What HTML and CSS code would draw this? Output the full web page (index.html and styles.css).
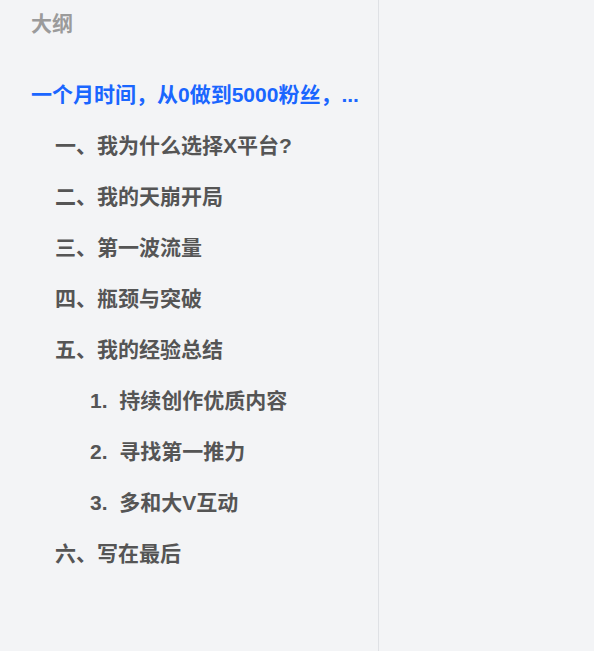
FILE: index.html
```html
<!DOCTYPE html>
<html lang="zh-CN">
<head>
<meta charset="utf-8">
<title>大纲</title>
<link rel="stylesheet" href="styles.css">
</head>
<body>
<div class="layout">
  <aside class="sidebar">
    <div class="sidebar-title">大纲</div>
    <ul class="outline">
      <li class="item level-1 active">一个月时间，从0做到5000粉丝，...</li>
      <li class="item level-2">一、我为什么选择X平台?</li>
      <li class="item level-2">二、我的天崩开局</li>
      <li class="item level-2">三、第一波流量</li>
      <li class="item level-2">四、瓶颈与突破</li>
      <li class="item level-2">五、我的经验总结</li>
      <li class="item level-3">1.&nbsp;&nbsp;持续创作优质内容</li>
      <li class="item level-3">2.&nbsp;&nbsp;寻找第一推力</li>
      <li class="item level-3">3.&nbsp;&nbsp;多和大V互动</li>
      <li class="item level-2">六、写在最后</li>
    </ul>
  </aside>
  <main class="content"></main>
</div>
</body>
</html>
```

FILE: styles.css
```css
html, body {
  margin: 0;
  padding: 0;
  height: 100%;
  background: #f3f4f6;
  font-family: "Liberation Sans", "Noto Sans CJK SC", sans-serif;
}

.layout {
  display: flex;
  height: 100%;
}

.sidebar {
  box-sizing: border-box;
  width: 379px;
  flex: 0 0 379px;
  border-right: 1px solid #dfe1e5;
  padding: 10px 12px 0 31px;
}

.sidebar-title {
  font-size: 21px;
  line-height: 28px;
  font-weight: bold;
  color: #9b9b9b;
}

.outline {
  list-style: none;
  margin: 31px 0 0 0;
  padding: 0;
}

.item {
  font-size: 21px;
  line-height: 51px;
  height: 51px;
  font-weight: bold;
  color: #555555;
  white-space: nowrap;
}

.item.active {
  color: #1a66ff;
}

.level-2 {
  padding-left: 24px;
}

.level-3 {
  padding-left: 59px;
}

.content {
  flex: 1;
}
```
